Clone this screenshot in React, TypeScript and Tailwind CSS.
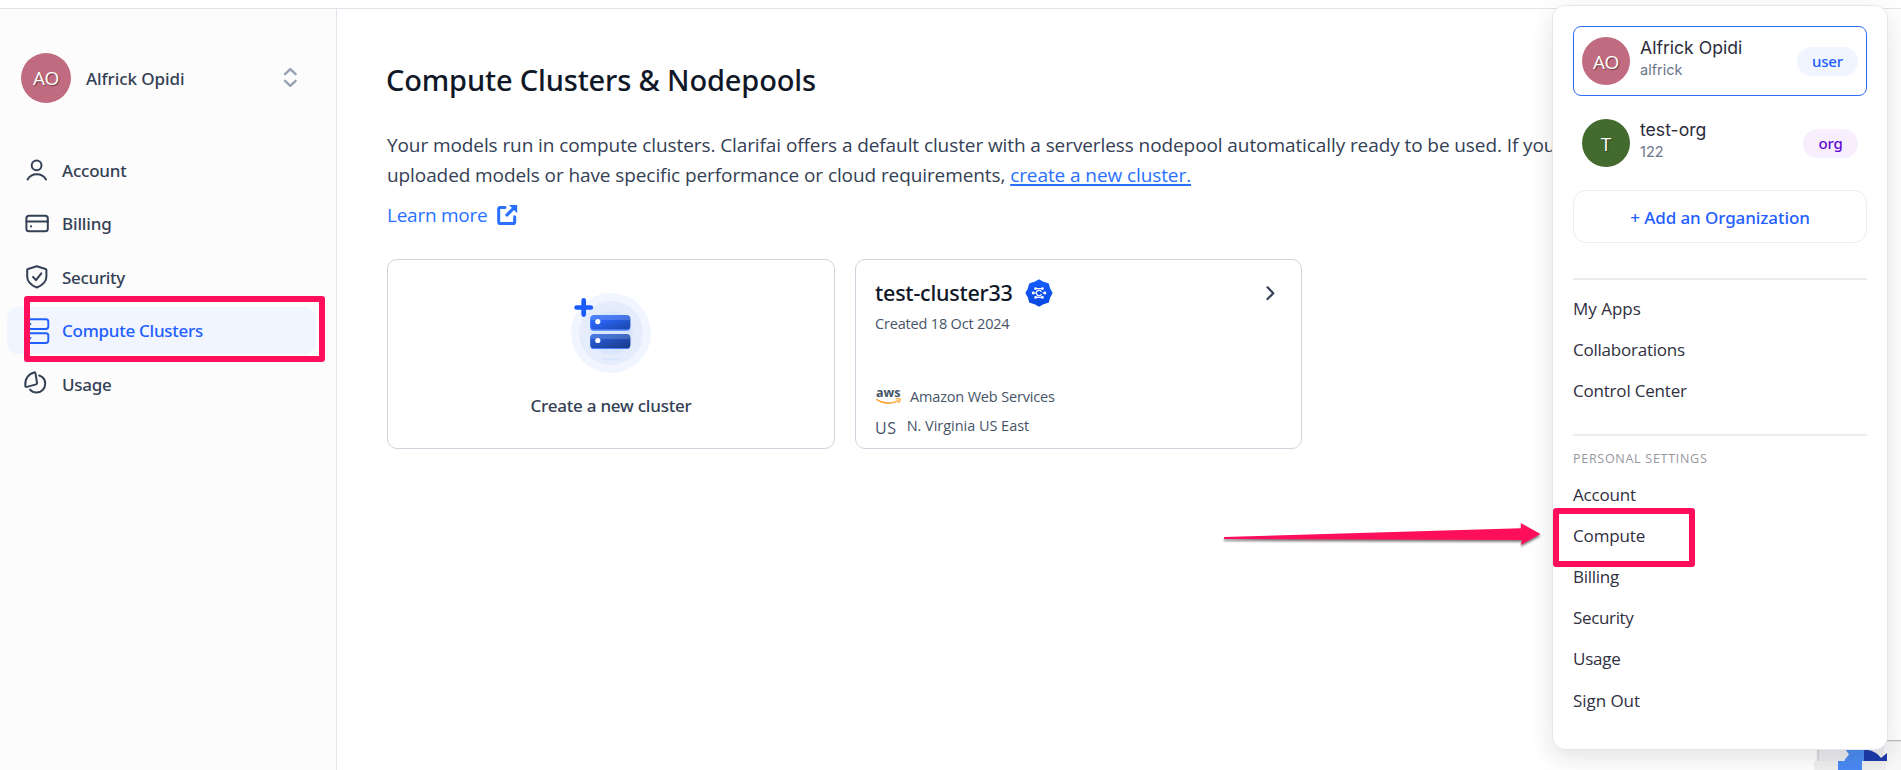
import type { ReactNode } from "react";

type NavItem = { label: string; icon: ReactNode; active?: boolean; spacing: string };

const iconProps = {
  fill: "none",
  stroke: "currentColor",
  strokeWidth: 2,
  strokeLinecap: "round" as const,
  strokeLinejoin: "round" as const,
  className: "block size-7 shrink-0",
  viewBox: "0 0 28 28",
};

const UserIcon = () => (
  <svg {...iconProps}>
    <circle cx="13.6" cy="8.3" r="4.9" />
    <path d="M4.6 22.4c1.9-3.3 5.2-5.1 9.2-5.1s7.3 1.8 9.2 5.1" />
  </svg>
);

const CardIcon = () => (
  <svg {...iconProps}>
    <rect x="3.4" y="5.7" width="21.4" height="15.6" rx="2.6" />
    <path d="M3.4 11.4h21.4" />
    <path d="M8 16.4h.01" strokeWidth="2.2" />
  </svg>
);

const ShieldIcon = () => (
  <svg {...iconProps}>
    <path d="M13.8 3.2 22.6 6c.5.2.8.5.8 1v6.4c0 5-4.4 8.9-9.6 11.1C8.4 22.3 4.2 18.4 4.2 13.4V7c0-.5.3-.8.8-1z" />
    <path d="m10 13.9 3 3.3 5.3-6.9" />
  </svg>
);

const ServersIcon = () => (
  <svg {...iconProps}>
    <rect x="3.5" y="2.2" width="21.8" height="9.8" rx="2.4" strokeWidth="1.9" />
    <rect x="3.5" y="16.2" width="21.8" height="9.8" rx="2.4" strokeWidth="1.9" />
    <path d="M7.3 7.1h.01M7.3 21.1h.01" strokeWidth="2.2" />
  </svg>
);

const PieIcon = () => (
  <svg {...iconProps}>
    <path d="M11.2 2.4C5.5 3.6 1.7 9 2.3 15.8c.1.9.8 1.3 1.6 1.1l9.2-2.5c.7-.2 1.1-.8.9-1.6L12.5 3.4c-.1-.7-.6-1.1-1.3-1z" />
    <path d="M16.2 5.5c3.7 1.2 6 4.3 6 8.3 0 4.9-3.8 8.7-8.6 8.7-2.7 0-4.9-1-6.5-2.9" />
  </svg>
);

const nav: NavItem[] = [
  { label: "Account", icon: <UserIcon />, spacing: "tracking-[-0.22px]" },
  { label: "Billing", icon: <CardIcon />, spacing: "tracking-[-0.15px]" },
  { label: "Security", icon: <ShieldIcon />, spacing: "tracking-[-0.3px]" },
  { label: "Compute Clusters", icon: <ServersIcon />, active: true, spacing: "tracking-[-0.26px]" },
  { label: "Usage", icon: <PieIcon />, spacing: "tracking-[-0.25px] pt-px" },
];

const Avatar = ({ text, className }: { text: string; className: string }) => (
  <div
    className={`flex shrink-0 items-center justify-center rounded-full font-['Open_Sans',sans-serif] text-[19px] font-normal text-white [text-shadow:1px_1px_1px_rgba(0,0,0,0.45)] ${className}`}
  >
    {text}
  </div>
);

const Sidebar = () => (
  <aside className="flex w-[337px] shrink-0 flex-col border-r border-[#e1e5eb] bg-[#fcfcfd] pt-[44px] pl-[7px] font-['Noto_Sans',sans-serif] text-[17px] font-medium text-[#344054]">
    <div className="flex h-[50px] items-center pr-[37px] pl-[14px]">
      <Avatar text="AO" className="size-[50px] bg-[#c16b80] tracking-[-0.4px]" />
      <span className="ml-[15px] flex-1 pt-px tracking-[-0.07px]">Alfrick Opidi</span>
      <svg
        viewBox="0 0 18 24"
        className="h-6 w-[18px]"
        fill="none"
        stroke="#98a2b3"
        strokeWidth="2.4"
        strokeLinecap="round"
        strokeLinejoin="round"
      >
        <path d="M4 8.2 9.3 3.1l5.3 5.1M4 14.8l5.3 5.1 5.3-5.1" />
      </svg>
    </div>
    <nav className="mt-[44px] flex flex-col gap-[6.4px]">
      {nav.map((n) => (
        <a
          key={n.label}
          className={`flex h-[47px] w-[309px] items-center gap-[11px] rounded-[11px] pl-4 ${n.active ? "bg-[#f0f5ff] text-[#1f5eff]" : ""}`}
        >
          {n.icon}
          <span className={n.spacing}>{n.label}</span>
        </a>
      ))}
    </nav>
  </aside>
);

const ClusterArt = () => (
  <svg viewBox="0 0 84 84" className="size-[84px]">
    <defs>
      <linearGradient id="top" x1="0" y1="0" x2="1" y2="1">
        <stop offset="0" stopColor="#2d6cff" />
        <stop offset="0.35" stopColor="#2a63f3" />
        <stop offset="1" stopColor="#1d46a8" />
      </linearGradient>
      <linearGradient id="bottom" x1="0" y1="0" x2="1" y2="1">
        <stop offset="0" stopColor="#2a63e8" />
        <stop offset="1" stopColor="#1a3a86" />
      </linearGradient>
    </defs>
    <circle cx="42" cy="42" r="40" fill="#f0f5ff" />
    <circle cx="42" cy="42" r="32" fill="#e5edfd" />
    <circle cx="42" cy="42" r="21.8" fill="#d9e5fb" />
    <rect x="33.5" y="67" width="17" height="2.2" rx="1.1" fill="#d9e5fb" />
    <rect x="21.3" y="25" width="40" height="14.8" rx="3.6" fill="#4a80ff" />
    <rect x="21.3" y="24" width="40" height="14.2" rx="3.6" fill="url(#top)" />
    <path d="M21.3 29v-1.4a3.6 3.6 0 0 1 3.6-3.6h32.8a3.6 3.6 0 0 1 3.6 3.6V29z" fill="#fff" opacity="0.16" />
    <rect x="21.3" y="43.5" width="40" height="14.5" rx="3.6" fill="#4a80ff" />
    <rect x="21.3" y="43" width="40" height="14" rx="3.6" fill="url(#bottom)" />
    <path d="M21.3 48v-1.4a3.6 3.6 0 0 1 3.6-3.6h32.8a3.6 3.6 0 0 1 3.6 3.6V48z" fill="#fff" opacity="0.16" />
    <circle cx="28.8" cy="30.6" r="2.6" fill="#fff" />
    <circle cx="28.8" cy="49.5" r="2.6" fill="#fff" />
    <path d="M14.7 9.4v14.2M7.6 16.5h14.2" stroke="#1a5cff" strokeWidth="4.7" strokeLinecap="round" />
  </svg>
);

const ClusterBadge = () => (
  <svg viewBox="0 0 28 28" className="size-7">
    <defs>
      <linearGradient id="badge" x1="0" y1="0" x2="0" y2="1">
        <stop offset="0" stopColor="#155eff" />
        <stop offset="1" stopColor="#0a47e0" />
      </linearGradient>
    </defs>
    <path
      d="M14 1.5 18.3 3.8 22.9 5.1 24.2 9.7 26.5 14 24.2 18.3 22.9 22.9 18.3 24.2 14 26.5 9.700 24.2 5.1 22.9 3.8 18.3 1.5 14 3.8 9.7 5.1 5.1 9.7 3.8z"
      fill="url(#badge)"
      stroke="url(#badge)"
      strokeWidth="2"
      strokeLinejoin="round"
    />
    <g stroke="#fff" strokeWidth="1.2" strokeLinecap="round" fill="none">
      <path d="M10.5 9.6h6.8M10.5 18.4h6.8M7.9 14h2.6M18 14h2M16.2 12.4a2.7 2.7 0 1 0 0 3.2" />
    </g>
    <g fill="#fff">
      <circle cx="10.6" cy="9.6" r="1.4" />
      <circle cx="17.4" cy="9.6" r="1.4" />
      <circle cx="10.6" cy="18.4" r="1.4" />
      <circle cx="17.4" cy="18.4" r="1.4" />
      <circle cx="8.2" cy="14" r="1.4" />
      <circle cx="19.9" cy="14" r="1.4" />
    </g>
  </svg>
);

const AwsLogo = () => (
  <div className="flex h-4 w-[25px] flex-col">
    <span className="h-[9px] text-[12.5px] leading-[7.5px] font-bold text-[#475467]">aws</span>
    <svg viewBox="0 0 25 7" className="h-[7px] w-[25px]" fill="none" stroke="#f9a63a" strokeLinecap="round">
      <path d="M.8 1.6C7 6 15.5 6.2 21.8 2.9" strokeWidth="1.6" />
      <path d="M20.3.9c1.5-.4 3.4-.3 3.7.2.2.6-.3 2.3-1.3 3.4" strokeWidth="1.3" />
    </svg>
  </div>
);

const Main = () => (
  <main className="flex-1 pl-[50px] text-[#344054]">
    <h1 className="mt-[51px] -ml-px font-['Noto_Sans',sans-serif] text-[29px] leading-[40px] font-medium tracking-[-0.16px] text-[#101828]">
      Compute Clusters &amp; Nodepools
    </h1>
    <div className="mt-[30px] text-[19px] leading-[30px] whitespace-nowrap">
      <p className="tracking-[-0.09px]">
        Your models run in compute clusters. Clarifai offers a default cluster with a serverless nodepool automatically
        ready to be used. If you
      </p>
      <p className="tracking-[-0.09px]">
        uploaded models or have specific performance or cloud requirements,{" "}
        <a className="text-[#2970ff] underline decoration-2 underline-offset-2">create a new cluster.</a>
      </p>
    </div>
    <div className="mt-[10px] flex items-center gap-[9px] text-[19px] leading-[30px] text-[#2970ff]">
      <a className="tracking-[-0.25px]">Learn more</a>
      <svg viewBox="0 0 22 22" className="-mt-px size-[22px]" fill="none" stroke="currentColor" strokeWidth="3" strokeLinejoin="round">
        <path d="M9 3.4H4.300c-.9 0-1.600.7-1.600 1.600v12.900c0 .9.7 1.600 1.600 1.600h12.800c.9 0 1.600-.7 1.600-1.600v-5.200" strokeLinecap="round" />
        <path d="m10 12 8.800-9" strokeWidth="3.2" />
        <path d="M13 1h8.200v8.200z" fill="currentColor" stroke="none" />
      </svg>
    </div>
    <div className="mt-[29px] flex gap-5">
      <section className="flex h-[190px] w-[448px] flex-col items-center rounded-[10px] border border-[#cfd4de] pt-[31px]">
        <ClusterArt />
        <p className="mt-[18px] font-['Noto_Sans',sans-serif] text-[17px] leading-[26px] font-medium tracking-[-0.23px]">
          Create a new cluster
        </p>
      </section>
      <section className="flex h-[190px] w-[447px] flex-col rounded-[10px] border border-[#cfd4de] pr-5 pl-[19px] pt-[16px] text-[14.5px] text-[#475467]">
        <div className="flex h-[34px] items-center">
          <h2 className="font-['Noto_Sans',sans-serif] text-[21.5px] leading-[30px] font-medium tracking-[-0.22px] text-[#101828]">
            test-cluster33
          </h2>
          <span className="ml-[12px]">
            <ClusterBadge />
          </span>
          <svg
            viewBox="0 0 16 16"
            className="mr-[2px] ml-auto size-4"
            fill="none"
            stroke="#344054"
            strokeWidth="2.2"
            strokeLinecap="round"
            strokeLinejoin="round"
          >
            <path d="m4.5 2.3 5.8 5.9-5.8 5.9" />
          </svg>
        </div>
        <p className="mt-[3px] leading-[22px] tracking-[-0.18px]">Created 18 Oct 2024</p>
        <div className="mt-[51px] flex h-[22px] items-center gap-[9px] pl-[1px] leading-[22px]">
          <AwsLogo />
          <span className="tracking-[-0.17px]">Amazon Web Services</span>
        </div>
        <div className="mt-[7px] flex h-[22px] items-center gap-[10px] leading-[22px]">
          <span className="mt-[3px] text-[16px] tracking-[0.6px]">US</span>
          <span className="tracking-[-0.03px]">N. Virginia US East</span>
        </div>
      </section>
    </div>
  </main>
);

const OrgRow = ({
  name,
  id,
  tag,
  selected,
  avatar,
  tagClass,
}: {
  name: string;
  id: string;
  tag: string;
  selected?: boolean;
  avatar: ReactNode;
  tagClass: string;
}) => (
  <div
    className={`flex h-[70px] items-center rounded-[8px] border px-2 ${selected ? "border-[#2f6bf5]" : "border-transparent"}`}
  >
    {avatar}
    <div className="ml-[10px] flex-1 pb-[6px] font-['Inter',sans-serif]">
      <p className="text-[17.6px] leading-[23px] text-[#2b2b3b]">{name}</p>
      <p className="text-[14.5px] leading-[21px] text-[#6b7588]">{id}</p>
    </div>
    <span
      className={`flex h-[29px] items-center justify-center rounded-full pt-px font-['Noto_Sans',sans-serif] text-[15px] font-medium tracking-[-0.2px] ${tagClass}`}
    >
      {tag}
    </span>
  </div>
);

const links: [string, string][] = [
  ["My Apps", ""],
  ["Collaborations", "tracking-[-0.23px]"],
  ["Control Center", "tracking-[-0.2px]"],
];

const settings: [string, string][] = [
  ["Account", "tracking-[-0.19px]"],
  ["Compute", "tracking-[-0.15px]"],
  ["Billing", "tracking-[-0.26px]"],
  ["Security", "tracking-[-0.35px]"],
  ["Usage", "tracking-[-0.25px]"],
  ["Sign Out", "tracking-[-0.05px]"],
];

const MenuLinks = ({ items }: { items: [string, string][] }) => (
  <ul className="text-[17px] leading-[41.2px] text-[#2f2f41]">
    {items.map(([t, c]) => (
      <li key={t} className={`h-[41.2px] ${c}`}>
        {t}
      </li>
    ))}
  </ul>
);

const AccountMenu = () => (
  <div className="absolute top-[5px] left-[1552px] h-[745px] w-[336px] rounded-[13px] border border-[#e4e7ec] bg-white px-5 pt-5 shadow-[0_8px_24px_rgba(16,24,40,0.12)]">
    <div className="flex flex-col gap-3">
      <OrgRow
        name="Alfrick Opidi"
        id="alfrick"
        tag="user"
        selected
        avatar={<Avatar text="AO" className="size-12 bg-[#c16b80] pt-[3px] tracking-[-0.4px]" />}
        tagClass="w-[61px] bg-[#f0f5ff] text-[#1f5eff]"
      />
      <OrgRow
        name="test-org"
        id="122"
        tag="org"
        avatar={<Avatar text="T" className="size-12 bg-[#446b2f] pt-[3px]" />}
        tagClass="w-[55px] bg-[#f8effe] text-[#5f0bd1]"
      />
      <button className="h-[53px] rounded-[13px] border border-[#ececef] pt-[3px] font-['Noto_Sans',sans-serif] text-[17px] font-medium tracking-[-0.09px] text-[#1f5eff]">
        + Add an Organization
      </button>
    </div>
    <hr className="mt-[35px] mb-[8px] border-t-2 border-[#ececee]" />
    <MenuLinks items={links} />
    <hr className="mt-[22px] border-t-2 border-[#ececee]" />
    <h3 className="mt-[12px] mb-[4px] text-[12.5px] leading-[22px] tracking-[0.72px] text-[#96969e]">
      PERSONAL SETTINGS
    </h3>
    <MenuLinks items={settings} />
  </div>
);

const CaptchaBadge = () => (
  <svg viewBox="0 0 87 30" className="absolute right-0 bottom-0 h-[30px] w-[87px]">
    <defs>
      <linearGradient id="edge" x1="0" y1="0" x2="1" y2="0">
        <stop offset="0" stopColor="#999" stopOpacity="0" />
        <stop offset="1" stopColor="#999" stopOpacity="0.55" />
      </linearGradient>
    </defs>
    <path d="M0 21h72v9H0z" fill="#f0f0f0" />
    <path d="M2 1h3v20H2z" fill="url(#edge)" />
    <path d="M5 1h82v20H5z" fill="#ededef" />
    <path d="M70 0h17v1.5H70z" fill="#bdbdbd" />
    <path d="M70 1.5h17V30H72v-9h-2z" fill="#f7f7f7" />
    <path d="M29 6h21v15H31l-.5-1 4.5-5.5z" fill="#4b8bf0" />
    <path d="M50 9.5c7 0 13.5 3.500 17 8.500l6-5v8H50z" fill="#1c3aa9" />
    <path d="M24 21h24v9H24z" fill="#4a8af4" />
  </svg>
);

const Annotations = () => (
  <>
    <div className="absolute top-[296px] left-[24px] h-[66px] w-[301px] rounded-[3px] border-[6px] border-[#ff0f5b]" />
    <div className="absolute top-[508px] left-[1553px] h-[59px] w-[142px] rounded-[3px] border-[6px] border-[#ff0f5b]" />
    <svg
      viewBox="0 0 330 40"
      className="absolute top-[515px] left-[1218px] h-10 w-[330px] drop-shadow-[0px_2px_1px_rgba(0,0,0,0.5)]"
    >
      <path d="M6 22 303 13.3 302.8 8 322.5 19 302.8 30 304 25 6 24z" fill="#ff0f5b" />
    </svg>
  </>
);

export default function App() {
  return (
    <div className="relative flex h-[770px] w-[1901px] flex-col overflow-hidden bg-white font-['Open_Sans','Noto_Sans',sans-serif]">
      <header className="h-[9px] shrink-0 border-b border-[#e1e5eb]" />
      <div className="flex flex-1">
        <Sidebar />
        <Main />
      </div>
      <CaptchaBadge />
      <AccountMenu />
      <Annotations />
    </div>
  );
}
